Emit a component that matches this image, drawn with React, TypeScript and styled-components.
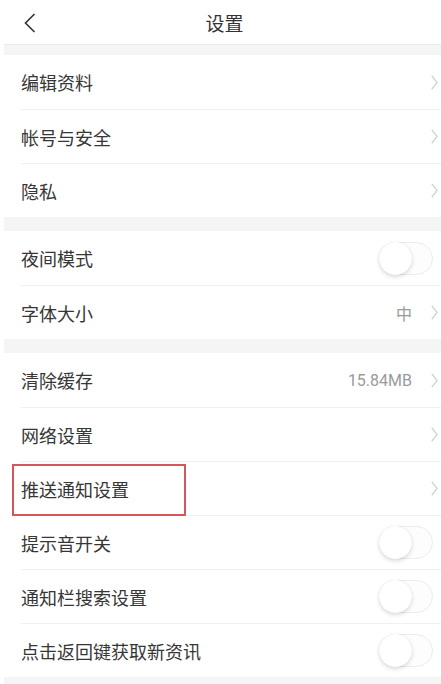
import React from 'react';
import styled, { createGlobalStyle } from 'styled-components';

const GlobalStyle = createGlobalStyle`
  html, body {
    margin: 0;
    padding: 0;
    background: #ffffff;
    font-family: "Noto Sans CJK SC", "Liberation Sans", sans-serif;
  }
`;

const Page = styled.div`
  width: 441px;
  height: 684px;
  overflow: hidden;
  background: #ffffff;
  position: relative;
`;

const Header = styled.div`
  height: 44px;
  display: flex;
  align-items: center;
  justify-content: center;
  position: relative;
  border-bottom: 1px solid #ececec;
  margin-left: 4px;
`;

const BackButton = styled.div`
  position: absolute;
  left: 18px;
  top: 13px;
  width: 14px;
  height: 20px;
`;

const Title = styled.div`
  font-size: 19px;
  color: #333333;
  margin-left: 4px;
`;

const Gap = styled.div<{ $h: number }>`
  height: ${(p) => p.$h}px;
  background: #f5f5f5;
  margin-left: 4px;
`;

const Group = styled.div`
  background: #ffffff;
`;

const Row = styled.div`
  height: 54px;
  margin-left: 21px;
  display: flex;
  align-items: center;
  padding-right: 3px;
  border-top: 1px solid #f0f0f0;
  box-sizing: border-box;

  &:first-child {
    border-top: none;
  }
`;

const Label = styled.div`
  flex: 1;
  font-size: 18px;
  color: #363636;
`;

const Value = styled.div`
  font-family: Roboto, "Noto Sans CJK SC", sans-serif;
  font-size: 16px;
  color: #9a9a9a;
  margin-right: 19px;
`;

const Chevron = styled.svg`
  width: 7px;
  height: 15px;
  margin-right: 0;
`;

const Toggle = styled.div`
  width: 54px;
  height: 33px;
  border-radius: 17px;
  border: 1px solid #ececec;
  box-sizing: border-box;
  background: #fdfdfd;
  position: relative;
  margin-right: 5px;
`;

const Knob = styled.div`
  position: absolute;
  left: -1px;
  top: -1px;
  width: 33px;
  height: 33px;
  border-radius: 50%;
  background: #ffffff;
  box-shadow: 0 2px 4px rgba(0, 0, 0, 0.14), 0 0 1px rgba(0, 0, 0, 0.12);
`;

const Highlight = styled.div`
  position: absolute;
  left: 12px;
  top: 464px;
  width: 174px;
  height: 52px;
  border: 2px solid #d4575c;
  box-sizing: border-box;
  pointer-events: none;
`;

type Item = { label: string; value?: string; toggle?: boolean };

const groups: Item[][] = [
  [{ label: '编辑资料' }, { label: '帐号与安全' }, { label: '隐私' }],
  [{ label: '夜间模式', toggle: true }, { label: '字体大小', value: '中' }],
  [
    { label: '清除缓存', value: '15.84MB' },
    { label: '网络设置' },
    { label: '推送通知设置' },
    { label: '提示音开关', toggle: true },
    { label: '通知栏搜索设置', toggle: true },
    { label: '点击返回键获取新资讯', toggle: true },
  ],
];

const Arrow = () => (
  <Chevron viewBox="0 0 7 15">
    <polyline points="0.8,0.8 6,7.5 0.8,14.2" fill="none" stroke="#cccccc" strokeWidth="1.2" />
  </Chevron>
);

const SettingRow = ({ item }: { item: Item }) => (
  <Row>
    <Label>{item.label}</Label>
    {item.value && <Value>{item.value}</Value>}
    {item.toggle ? (
      <Toggle>
        <Knob />
      </Toggle>
    ) : (
      <Arrow />
    )}
  </Row>
);

export default function App() {
  return (
    <Page>
      <GlobalStyle />
      <Header>
        <BackButton>
          <svg width="14" height="20" viewBox="0 0 14 20">
            <polyline points="12.5,1 3.5,10 12.5,19" fill="none" stroke="#333333" strokeWidth="1.6" />
          </svg>
        </BackButton>
        <Title>设置</Title>
      </Header>
      <Gap $h={10} />
      {groups.map((g, i) => (
        <React.Fragment key={i}>
          <Group>
            {g.map((item) => (
              <SettingRow key={item.label} item={item} />
            ))}
          </Group>
          <Gap $h={i === groups.length - 1 ? 20 : 14} />
        </React.Fragment>
      ))}
      <Highlight />
    </Page>
  );
}
